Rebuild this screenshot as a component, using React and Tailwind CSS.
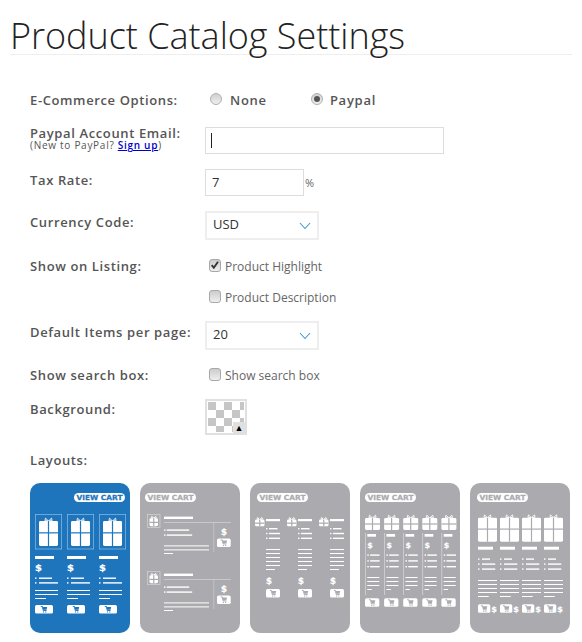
import React from 'react';

const BLUE = '#1f75bc';
const GRAY = '#ababaf';

function Bar({ x, y, w, h = 1 }) {
  return <rect x={x} y={y} width={w} height={h} fill="#fff" />;
}

function Pill({ x, w = 51, color }) {
  return (
    <g>
      <rect x={x} y={10} width={w} height={9} rx={4.5} fill="#fff" />
      <text x={x + w / 2} y={17.2} textAnchor="middle" fontSize="7" fontWeight="700" fontFamily="DejaVu Sans, sans-serif" textLength={w - 5} lengthAdjust="spacingAndGlyphs" stroke={color} strokeWidth="0.25" fill={color}>VIEW CART</text>
    </g>
  );
}

function Gift({ x, y, w, h, color, bow = 3 }) {
  const mid = x + w / 2;
  return (
    <g>
      <path d={`M${mid} ${y} L${mid - bow} ${y - bow + 0.2} L${mid - bow - 0.6} ${y - 0.4} Z M${mid} ${y} L${mid + bow} ${y - bow + 0.2} L${mid + bow + 0.6} ${y - 0.4} Z`} fill="none" stroke="#fff" strokeWidth="0.9" />
      <rect x={x} y={y} width={w} height={h} rx={1.4} fill="#fff" />
      <rect x={mid - 0.6} y={y} width={1.2} height={h} fill={color} />
      <rect x={x} y={y + h * 0.45} width={w} height={1.2} fill={color} />
    </g>
  );
}

function Cart({ x, y, w, h = 8.5, color }) {
  const c = x + w / 2;
  const m = y + h / 2;
  return (
    <g>
      <rect x={x} y={y} width={w} height={h} rx={1.6} fill="#fff" />
      <path d={`M${c - 3.2} ${m - 2.8} h1.6 l0.8 4 h3.4`} fill="none" stroke={color} strokeWidth="1" />
      <path d={`M${c - 1.4} ${m - 2.2} h4.6 l-0.7 2.6 h-3.3 Z`} fill={color} />
      <rect x={c - 1} y={m + 2.2} width={1.1} height={1.1} fill={color} />
      <rect x={c + 1.2} y={m + 2.2} width={1.1} height={1.1} fill={color} />
    </g>
  );
}

function Dollar({ x, y, size = 8.5, w = 7 }) {
  return <text x={x} y={y} fontSize={size} fontWeight="700" fontFamily="DejaVu Sans, sans-serif" textLength={w} lengthAdjust="spacingAndGlyphs" stroke="#fff" strokeWidth="0.2" fill="#fff">$</text>;
}

function Bullet({ x, y, w, gap = 4 }) {
  return (
    <g>
      <rect x={x} y={y} width={1.5} height={1.4} fill="#fff" />
      <rect x={x + gap} y={y} width={w} height={1.4} fill="#fff" />
    </g>
  );
}

function Thumb({ color, children }) {
  return (
    <svg width="100" height="150" viewBox="0 0 100 150" className="block shrink-0">
      <rect width="100" height="150" rx="10" fill={color} />
      {children}
    </svg>
  );
}

function LayoutOne() {
  return (
    <Thumb color={BLUE}>
      <Pill x={44} color={BLUE} />
      {[5, 37, 69].map((x) => (
        <g key={x}>
          <rect x={x + 0.4} y={31.4} width={26.2} height={34.6} fill="none" stroke="#7db4e2" strokeWidth="0.8" />
          <Gift x={x + 4} y={38} w={19} h={25} color={BLUE} />
          <Bar x={x} y={73} w={19} h={3} />
          <Dollar x={x} y={88} />
          <Bullet x={x} y={94.5} w={13} />
          <Bullet x={x} y={99.2} w={19} />
          <Bar x={x} y={107} w={23} />
          <Bar x={x} y={111} w={23} />
          <Bar x={x} y={115} w={11} />
          <Cart x={x} y={122} w={18} color={BLUE} />
        </g>
      ))}
    </Thumb>
  );
}

function LayoutTwo() {
  return (
    <Thumb color={GRAY}>
      <Pill x={5} color={GRAY} />
      {[0, 57].map((dy) => (
        <g key={dy} transform={`translate(0 ${dy})`}>
          <rect x={7.4} y={31.4} width={12.6} height={13.2} fill="none" stroke="#d4d4d6" strokeWidth="0.7" />
          <Gift x={9.5} y={35.2} w={8.5} h={8} color={GRAY} bow={2} />
          <Bar x={24} y={33.6} w={29} h={2.4} />
          <rect x={24} y={39} width={67} height={0.7} fill="#d4d4d6" />
          <rect x={73.5} y={39} width={0.7} height={30} fill="#d4d4d6" opacity="0.8" />
          <Bullet x={24} y={46.4} w={22.5} gap={2.7} />
          <Bullet x={24} y={51.4} w={25.5} gap={2.7} />
          <Bar x={24} y={62.4} w={45} />
          <Bar x={24} y={66.4} w={45} />
          <Bar x={24} y={70} w={9} />
          <Dollar x={81} y={51.5} size={8} w={6} />
          <Cart x={77} y={55.5} w={13.7} color={GRAY} />
        </g>
      ))}
    </Thumb>
  );
}

function LayoutThree() {
  return (
    <Thumb color={GRAY}>
      <Pill x={7} color={GRAY} />
      {[0, 32, 64].map((dx) => (
        <g key={dx} transform={`translate(${dx} 0)`}>
          <Gift x={5} y={36.5} w={9.5} h={6.8} color={GRAY} bow={2.2} />
          <Bar x={16} y={36} w={14} h={2.2} />
          <Bullet x={16} y={45} w={8.5} gap={3} />
          <Bullet x={16} y={49.8} w={11} gap={3} />
          <Bullet x={16} y={54.6} w={11} gap={3} />
          {[66, 70, 74, 78, 82].map((y) => <Bar key={y} x={16} y={y} w={14} />)}
          <Bar x={16} y={86} w={9} />
          <Dollar x={16} y={100.5} size={8} w={6} />
          <Cart x={16} y={106} w={14} color={GRAY} />
        </g>
      ))}
    </Thumb>
  );
}

function LayoutFour() {
  return (
    <Thumb color={GRAY}>
      <Pill x={5} color={GRAY} />
      {[0, 19.1, 38.2, 57.3, 76.4].map((dx) => (
        <g key={dx} transform={`translate(${dx} 0)`}>
          <Gift x={5} y={35} w={15} h={12} color={GRAY} />
          <rect x={5} y={50} width={0.8} height={62} fill="#d4d4d6" />
          <Bar x={7.3} y={51} w={8.7} h={2.7} />
          <Dollar x={7.3} y={65.3} size={7.5} w={5.5} />
          {[71.4, 77.2, 83].map((y) => <Bullet key={y} x={7.3} y={y} w={9.5} gap={2.8} />)}
          {[94, 98, 102].map((y) => <Bar key={y} x={7.3} y={y} w={12} />)}
          <Bar x={7.3} y={106} w={4.4} />
          <Cart x={5} y={115.3} w={14.3} color={GRAY} />
        </g>
      ))}
    </Thumb>
  );
}

function LayoutFive() {
  return (
    <Thumb color={GRAY}>
      <Pill x={7} color={GRAY} />
      {[0, 22, 44, 66].map((dx) => (
        <g key={dx} transform={`translate(${dx} 0)`}>
          <Gift x={8} y={34.7} w={19} h={24} color={GRAY} />
          <Bar x={8} y={63.7} w={15} h={3} />
          <Bullet x={8} y={75.4} w={8} gap={4} />
          <Bullet x={8} y={80.4} w={13.3} gap={4} />
          <Bullet x={8} y={85.4} w={13.3} gap={4} />
          {[97, 101, 105, 109].map((y) => <Bar key={y} x={8} y={y} w={19} />)}
          <Bar x={8} y={113} w={10.7} />
          <Cart x={8} y={121.3} w={12.3} color={GRAY} />
          <Dollar x={21.3} y={128.8} size={7.5} w={5.7} />
        </g>
      ))}
    </Thumb>
  );
}

function Radio({ checked }) {
  return (
    <span className="flex w-3 h-3 items-center justify-center rounded-full border border-[#b0b0b0] bg-linear-to-b from-[#cfcfcf] to-[#f0f0f0]">
      {checked && <span className="w-[6px] h-[6px] rounded-full bg-[#555]" />}
    </span>
  );
}

function Checkbox({ checked, label }) {
  return (
    <div className="flex items-center h-4 pl-[4px]">
      <span className="relative w-[12px] h-[13px] mt-[-4px] rounded-[3px] border border-[#a8a8a8] bg-linear-to-b from-[#cccccc] to-[#eeeeee]">
        {checked && (
          <svg viewBox="0 0 12 12" className="absolute left-0 top-0 w-[10px] h-[11px]">
            <path d="M2 5.5 L4.6 8.6 L9.6 1.6" fill="none" stroke="#333" strokeWidth="2.2" />
          </svg>
        )}
      </span>
      <span className="ml-[4px] text-[12px] text-[#666]">{label}</span>
    </div>
  );
}

function Label({ children, className = '' }) {
  return <div className={`w-[175px] shrink-0 text-[13px] font-semibold tracking-[0.62px] text-[#555] ${className}`}>{children}</div>;
}

function Select({ value }) {
  return (
    <div className="flex w-[114px] h-[29px] items-center justify-between border-2 border-[#eeeeee] pl-[6px] pr-[6px] pb-[2px] text-[13px] text-[#333]">
      <span>{value}</span>
      <svg viewBox="0 0 12 8" className="w-[12px] h-[8px] mt-[3px]">
        <path d="M1 1 L6 6.5 L11 1" fill="none" stroke="#3d9ad6" strokeWidth="1.1" />
      </svg>
    </div>
  );
}

export default function App() {
  return (
    <div className="w-[582px] h-[642px] overflow-hidden bg-white font-['Open_Sans',sans-serif]">
      <h1 className="mx-[10px] h-[55px] border-b border-[#eeeeee] text-[36px] leading-[50px] pt-[11px] font-light tracking-[-0.02px] text-[#222]">
        Product Catalog Settings
      </h1>

      <div className="flex flex-col pl-[30px]">
        <div className="flex items-center h-6 mt-[34px]">
          <Label>E-Commerce Options:</Label>
          <div className="flex items-center text-[13px] font-semibold tracking-[0.75px] text-[#555]">
            <span className="ml-[5px] mt-[-5px]"><Radio /></span>
            <span className="ml-[8px]">None</span>
            <span className="ml-[44px] mt-[-5px]"><Radio checked /></span>
            <span className="ml-[7px]">Paypal</span>
          </div>
        </div>

        <div className="flex items-start h-[27px] mt-[14px]">
          <Label className="leading-[13px]">
            Paypal Account Email:
            <div className="text-[10px] leading-[11px] font-normal tracking-[0.72px] text-[#555] whitespace-nowrap">
              (New to PayPal? <a className="text-[#0000cc] underline font-semibold">Sign up</a>)
            </div>
          </Label>
          <div className="flex items-center w-[239px] h-[27px] border border-[#dddddd] pl-[5px]">
            <span className="w-px h-[15px] bg-[#222]" />
          </div>
        </div>

        <div className="flex items-start h-[27px] mt-[15px]">
          <Label className="leading-[22px]">Tax Rate:</Label>
          <div className="flex w-[99px] h-[27px] items-center border border-[#dddddd] pl-[6px] text-[13px] text-[#333]">7</div>
          <span className="ml-[1px] mt-[6px] text-[11px] text-[#666]">%</span>
        </div>

        <div className="flex items-start h-[29px] mt-[15px]">
          <Label className="leading-[22px]">Currency Code:</Label>
          <Select value="USD" />
        </div>

        <div className="flex items-start h-[54px] mt-[15px]">
          <Label className="leading-[22px]">Show on Listing:</Label>
          <div className="flex flex-col gap-[15px] pt-[4px]">
            <Checkbox checked label="Product Highlight" />
            <Checkbox label="Product Description" />
          </div>
        </div>

        <div className="flex items-start h-[29px] mt-[12px]">
          <Label className="leading-[22px]">Default Items per page:</Label>
          <Select value="20" />
        </div>

        <div className="flex items-center h-6 mt-[14px]">
          <Label>Show search box:</Label>
          <Checkbox label="Show search box" />
        </div>

        <div className="flex items-start h-9 mt-[11px]">
          <Label className="leading-[20px]">Background:</Label>
          <div className="relative w-[42px] h-9 border-2 border-[#e0e0e0] p-px bg-clip-content bg-origin-content bg-[repeating-conic-gradient(#ffffff_0_25%,#c6c6c6_0_50%)] bg-[length:16px_16px]">
            <span className="absolute right-0 bottom-0 flex w-[12px] h-[11px] items-center justify-center bg-[#e0e0e0] text-[9px] leading-none text-black">▲</span>
          </div>
        </div>

        <div className="h-5 mt-[15px]">
          <Label className="leading-[20px]">Layouts:</Label>
        </div>

        <div className="flex gap-[10px] mt-[13px]">
          <LayoutOne />
          <LayoutTwo />
          <LayoutThree />
          <LayoutFour />
          <LayoutFive />
        </div>
      </div>
    </div>
  );
}
